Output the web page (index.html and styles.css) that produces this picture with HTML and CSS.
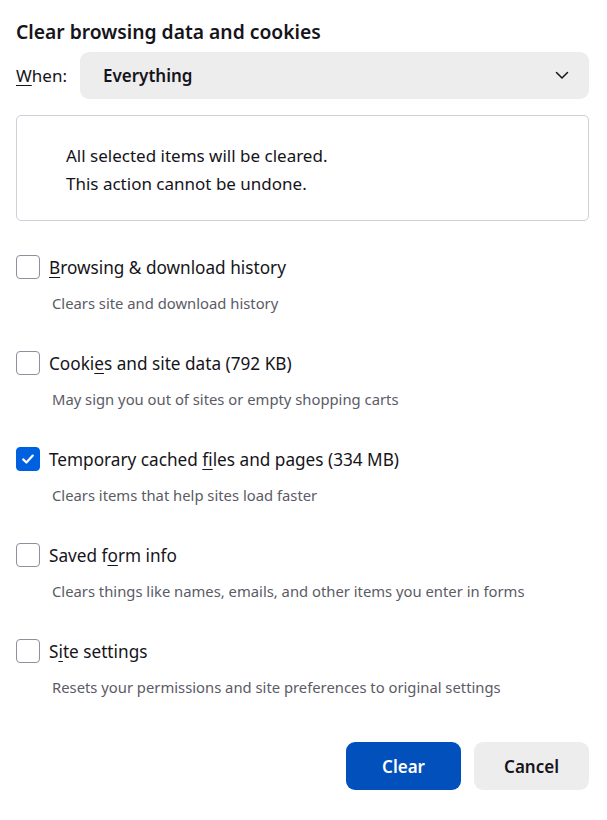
FILE: index.html
```html
<!DOCTYPE html>
<html lang="en">
<head>
<meta charset="utf-8">
<title>Clear browsing data and cookies</title>
<link rel="stylesheet" href="styles.css">
</head>
<body>
<div class="dialog">
  <h1 class="title">Clear browsing data and cookies</h1>
  <div class="when-row">
    <label class="when-label"><u>W</u>hen:</label>
    <div class="select">
      <span class="select-value">Everything</span>
      <svg class="chevron" width="14" height="9" viewBox="0 0 14 9"><path d="M1.5 1.5 L7 7 L12.5 1.5" fill="none" stroke="#15141a" stroke-width="1.5" stroke-linecap="round" stroke-linejoin="round"/></svg>
    </div>
  </div>
  <div class="notice">
    <p>All selected items will be cleared.</p>
    <p>This action cannot be undone.</p>
  </div>
  <div class="options">
    <div class="option">
      <div class="option-head"><span class="box"></span><span class="label"><u>B</u>rowsing &amp; download history</span></div>
      <div class="desc">Clears site and download history</div>
    </div>
    <div class="option">
      <div class="option-head"><span class="box"></span><span class="label">Cooki<u>e</u>s and site data (792 KB)</span></div>
      <div class="desc">May sign you out of sites or empty shopping carts</div>
    </div>
    <div class="option">
      <div class="option-head"><span class="box checked"><svg width="16" height="16" viewBox="0 0 16 16"><path d="M3.2 8.4 L6.4 11.5 L12.8 4.6" fill="none" stroke="#fff" stroke-width="2.2" stroke-linecap="round" stroke-linejoin="round"/></svg></span><span class="label">Temporary cached <u>f</u>iles and pages (334 MB)</span></div>
      <div class="desc">Clears items that help sites load faster</div>
    </div>
    <div class="option">
      <div class="option-head"><span class="box"></span><span class="label">Saved f<u>o</u>rm info</span></div>
      <div class="desc">Clears things like names, emails, and other items you enter in forms</div>
    </div>
    <div class="option">
      <div class="option-head"><span class="box"></span><span class="label">S<u>i</u>te settings</span></div>
      <div class="desc">Resets your permissions and site preferences to original settings</div>
    </div>
  </div>
  <div class="buttons">
    <button class="btn primary">Clear</button>
    <button class="btn secondary">Cancel</button>
  </div>
</div>
</body>
</html>
```

FILE: styles.css
```css
html, body {
  margin: 0;
  padding: 0;
  background: #ffffff;
}
body {
  font-family: "Noto Sans", "Open Sans", sans-serif;
  color: #15141a;
}
.dialog {
  padding: 20px 18px 0 16px;
}
.title {
  font-size: 19.3px;
  font-weight: 600;
  line-height: 24px;
  margin: 0;
}
.when-row {
  display: flex;
  align-items: center;
  gap: 13px;
  margin-top: 8px;
}
.when-label {
  font-size: 17px;
}
.when-label u {
  text-underline-offset: 3px;
}
.select {
  flex: 1;
  height: 47px;
  background: #ededed;
  border-radius: 9px;
  display: flex;
  align-items: center;
  justify-content: space-between;
  padding: 0 20px 0 23px;
}
.select-value {
  font-size: 17px;
  font-weight: 600;
}
.notice {
  margin-top: 16px;
  border: 1px solid #cfcfd8;
  border-radius: 5px;
  padding: 26px 20px 22px 49px;
}
.notice p {
  margin: 0;
  font-size: 17px;
  line-height: 28px;
}
.options {
  margin-top: 34px;
  display: flex;
  flex-direction: column;
  gap: 38px;
}
.option-head {
  display: flex;
  align-items: center;
  gap: 9px;
  height: 24px;
}
.box {
  width: 22px;
  height: 22px;
  border: 1px solid #8f8f9d;
  border-radius: 4px;
  display: inline-flex;
  align-items: center;
  justify-content: center;
  flex: none;
}
.box.checked {
  background: #0061e0;
  border-color: #0061e0;
}
.label {
  font-size: 17.2px;
}
.label u {
  text-underline-offset: 3px;
}
.desc {
  margin-top: 14px;
  margin-left: 36px;
  font-size: 14.8px;
  line-height: 20px;
  color: #5b5b66;
}
.buttons {
  display: flex;
  justify-content: flex-end;
  gap: 13px;
  margin-top: 45px;
}
.btn {
  width: 115px;
  height: 48px;
  border: none;
  border-radius: 9px;
  font-family: inherit;
  font-size: 17px;
  font-weight: 600;
}
.btn.primary {
  background: #0250bb;
  color: #ffffff;
}
.btn.secondary {
  background: #ededed;
  color: #15141a;
}
```
